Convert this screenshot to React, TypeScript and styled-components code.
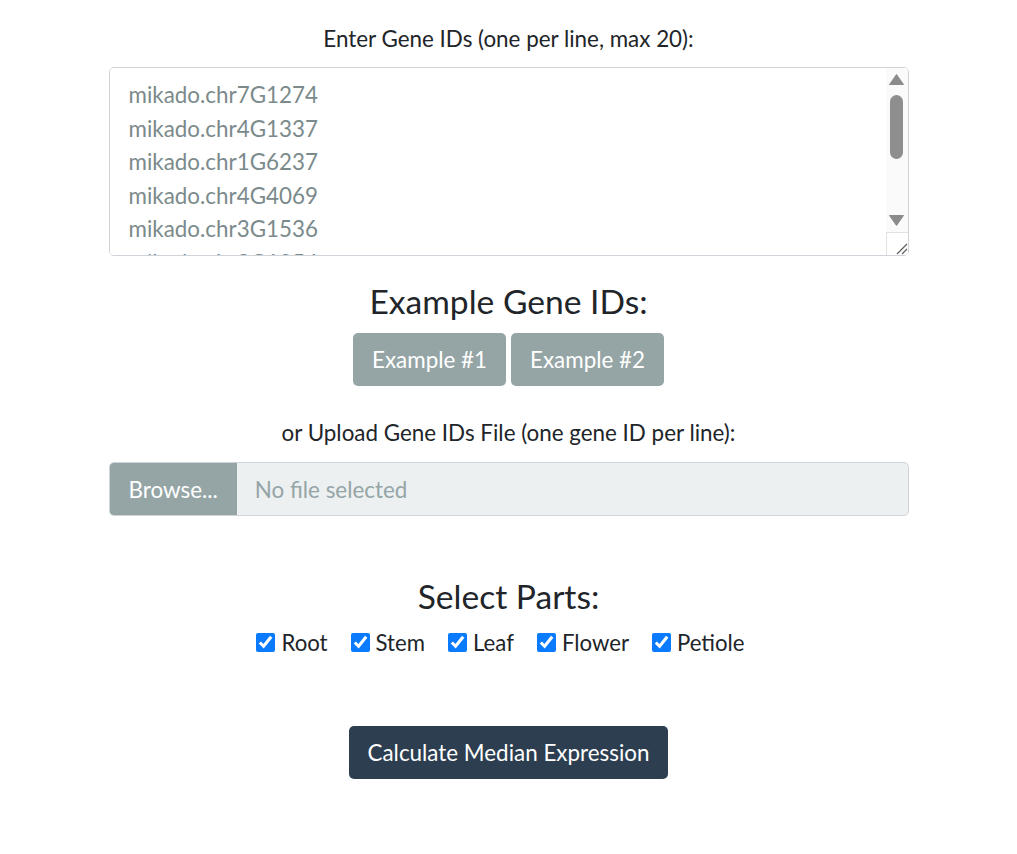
import React from "react";
import styled, { createGlobalStyle } from "styled-components";

const Global = createGlobalStyle`
  html, body { margin: 0; padding: 0; background: #fff; }
  body { font-family: Lato, "Noto Sans", sans-serif; color: #212529; }
  * { box-sizing: border-box; }
`;

const Page = styled.div`
  max-width: 800px;
  margin: 0 auto;
  padding-top: 24px;
  display: flex;
  flex-direction: column;
  align-items: stretch;
  text-align: center;
`;

const Label = styled.label<{ $top?: number; $bottom?: number }>`
  display: block;
  font-size: 22.4px;
  line-height: 30px;
  margin-top: ${(p) => p.$top ?? 0}px;
  margin-bottom: ${(p) => p.$bottom ?? 13}px;
`;

const AreaWrap = styled.div`
  position: relative;
`;

const GeneArea = styled.textarea`
  display: block;
  width: 100%;
  height: 189px;
  padding: 10px 30px 10px 19px;
  font-family: Lato, "Noto Sans", sans-serif;
  font-size: 22.4px;
  line-height: 1.5;
  color: #7b8a8b;
  border: 1px solid #ced4da;
  border-radius: 5px;
  background: #fff;
  overflow-y: scroll;
  outline: none;
  resize: none;
`;

const ScrollBar = styled.div`
  position: absolute;
  top: 1px;
  right: 1px;
  bottom: 1px;
  width: 22px;
  display: flex;
  flex-direction: column;
  background: #fafafa;
  border-top-right-radius: 4px;
  border-bottom-right-radius: 4px;
  pointer-events: none;
`;

const ArrowBox = styled.div`
  height: 23px;
  display: flex;
  align-items: center;
  justify-content: center;
`;

const Track = styled.div`
  flex: 1;
  display: flex;
  justify-content: center;
  padding-top: 4px;
`;

const Thumb = styled.div`
  width: 13px;
  height: 64px;
  border-radius: 7px;
  background: #8e8e8e;
`;

const Corner = styled.div`
  height: 23px;
  background: #fff;
  border-top: 1px solid #e2e2e2;
  border-left: 1px solid #e2e2e2;
  border-bottom-right-radius: 4px;
  display: flex;
  align-items: flex-end;
  justify-content: flex-end;
`;

const Heading = styled.h3<{ $top: number }>`
  margin: ${(p) => p.$top}px 0 0;
  font-size: 33.6px;
  line-height: 40px;
  font-weight: 400;
`;

const ButtonRow = styled.div`
  display: flex;
  justify-content: center;
  gap: 5px;
  margin-top: 12px;
`;

const Button = styled.button<{ $variant: "secondary" | "primary" }>`
  font-family: Lato, "Noto Sans", sans-serif;
  font-size: 22.4px;
  line-height: 31px;
  padding: 11px 19px;
  border: none;
  border-radius: 5px;
  color: #fff;
  background: ${(p) => (p.$variant === "primary" ? "#2c3e50" : "#95a5a6")};
  cursor: pointer;
`;

const FileBox = styled.label`
  display: flex;
  height: 54px;
  border: 1px solid #ced4da;
  border-radius: 5px;
  overflow: hidden;
  background: #ecf0f1;
  text-align: left;
  input { display: none; }
`;

const Browse = styled.span`
  display: flex;
  align-items: center;
  padding: 0 19px;
  background: #95a5a6;
  color: #fff;
  font-size: 22.4px;
`;

const FileName = styled.span`
  display: flex;
  align-items: center;
  padding: 0 18px;
  color: #95a5a6;
  font-size: 22.4px;
`;

const CheckRow = styled.div`
  display: flex;
  justify-content: center;
  margin-top: 10px;
`;

const CheckItem = styled.label`
  display: flex;
  align-items: center;
  gap: 6px;
  margin-right: 23px;
  font-size: 22.2px;
  line-height: 33px;
  &:last-child { margin-right: 16px; }
  input {
    width: 19px;
    height: 19px;
    margin: 0;
    accent-color: #0a7bff;
  }
`;

const SubmitWrap = styled.div`
  display: flex;
  justify-content: center;
  margin-top: 67px;
`;

const genes = [
  "mikado.chr7G1274",
  "mikado.chr4G1337",
  "mikado.chr1G6237",
  "mikado.chr4G4069",
  "mikado.chr3G1536",
  "mikado.chr3G1054",
  "mikado.chr2G2211",
  "mikado.chr5G0873",
  "mikado.chr6G3412",
  "mikado.chr1G0190",
  "mikado.chr2G5578",
];

const parts = ["Root", "Stem", "Leaf", "Flower", "Petiole"];

function Triangle({ down }: { down?: boolean }) {
  return (
    <svg width="15" height="11" viewBox="0 0 15 11" aria-hidden="true">
      <path d={down ? "M0.5 0.5H14.5L7.5 10.5Z" : "M7.5 0.5L14.5 10.5H0.5Z"} fill="#8b8b8b" strokeLinejoin="round" stroke="#8b8b8b" strokeWidth="1" />
    </svg>
  );
}

function Grip() {
  return (
    <svg width="14" height="14" viewBox="0 0 14 14" aria-hidden="true">
      <path d="M13 3L3 13M13 8L8 13" stroke="#5e5e5e" strokeWidth="1.2" fill="none" />
    </svg>
  );
}

export default function App() {
  return (
    <>
      <Global />
      <Page>
        <Label htmlFor="genes">Enter Gene IDs (one per line, max 20):</Label>
        <AreaWrap>
          <GeneArea id="genes" defaultValue={genes.join("\n")} spellCheck={false} />
          <ScrollBar>
            <ArrowBox>
              <Triangle />
            </ArrowBox>
            <Track>
              <Thumb />
            </Track>
            <ArrowBox>
              <Triangle down />
            </ArrowBox>
            <Corner>
              <Grip />
            </Corner>
          </ScrollBar>
        </AreaWrap>
        <Heading $top={25}>Example Gene IDs:</Heading>
        <ButtonRow>
          <Button $variant="secondary">Example #1</Button>
          <Button $variant="secondary">Example #2</Button>
        </ButtonRow>
        <Label $top={32} $bottom={14}>
          or Upload Gene IDs File (one gene ID per line):
        </Label>
        <FileBox>
          <input type="file" />
          <Browse>Browse...</Browse>
          <FileName>No file selected</FileName>
        </FileBox>
        <Heading $top={60}>Select Parts:</Heading>
        <CheckRow>
          {parts.map((p) => (
            <CheckItem key={p}>
              <input type="checkbox" defaultChecked />
              {p}
            </CheckItem>
          ))}
        </CheckRow>
        <SubmitWrap>
          <Button $variant="primary">Calculate Median Expression</Button>
        </SubmitWrap>
      </Page>
    </>
  );
}
